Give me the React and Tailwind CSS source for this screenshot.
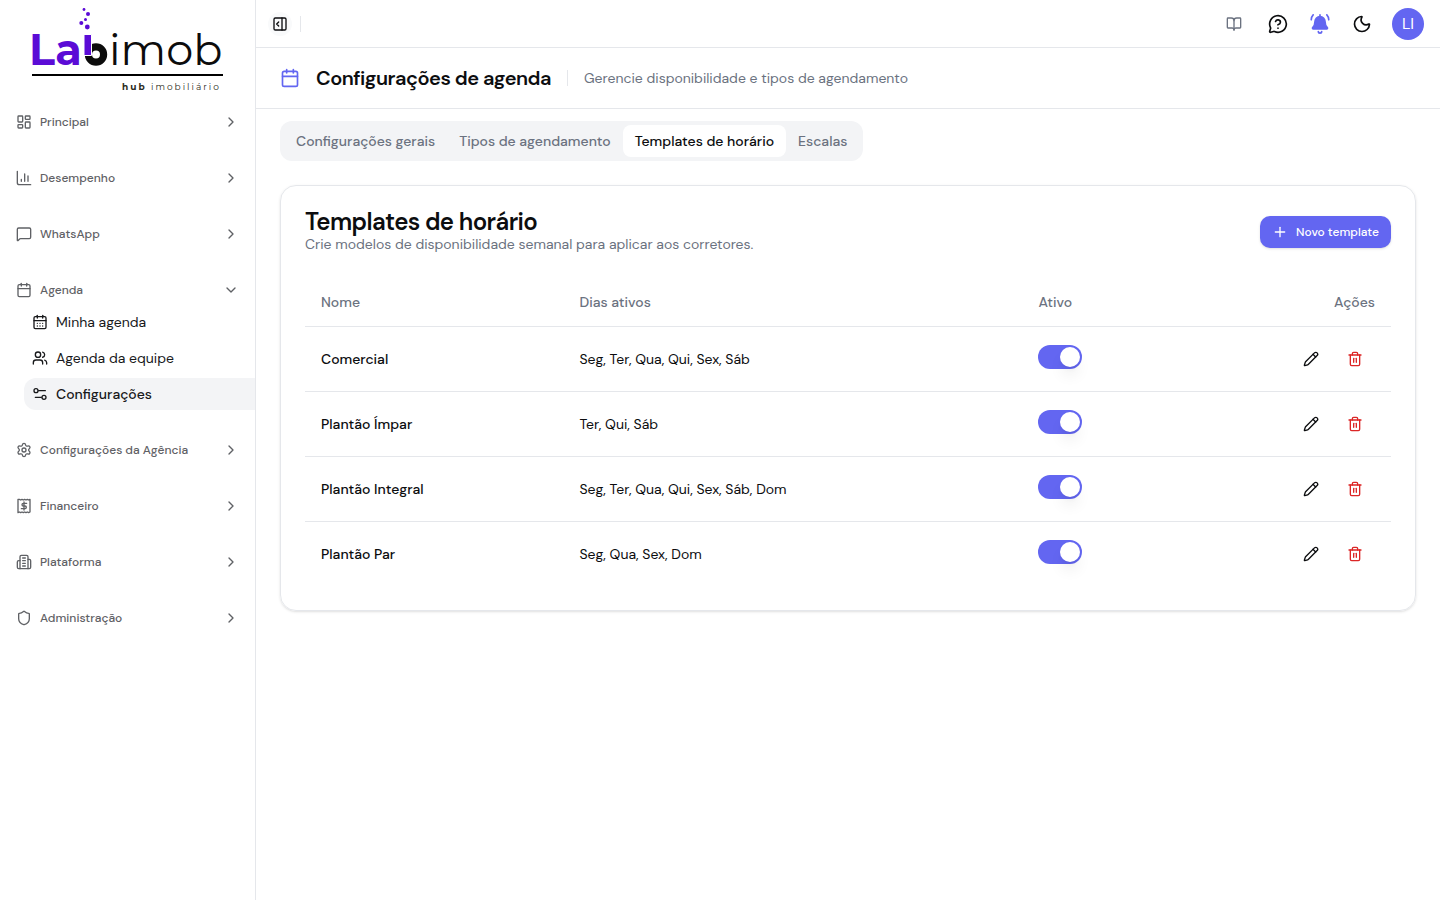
import { useState } from "react";
import {
  LayoutDashboard, MessageSquare, Calendar, CalendarDays, Users,
  Settings, Shield, ChevronRight, ChevronDown, PanelRightOpen, BookOpen,
  MessageCircleQuestionMark, Moon, Plus, Pencil, Trash2,
} from "lucide-react";

const Svg = ({ children, className, w = 2 }) => (
  <svg viewBox="0 0 24 24" fill="none" stroke="currentColor" strokeWidth={w} strokeLinecap="round" strokeLinejoin="round" className={className} aria-hidden="true">
    {children}
  </svg>
);

const Chart = ({ className }) => (
  <Svg className={className}>
    <path d="M2 2v17a3 3 0 0 0 3 3h17M8 17v-3M13 17V6M18 17V9" />
  </Svg>
);
const Dollar = ({ className }) => (
  <Svg className={className}>
    <path d="M3 2v20l2-1 2 1 2-1 2 1 2-1 2 1 2-1 2 1 2-1V2l-2 1-2-1-2 1-2-1-2 1-2-1-2 1-2-1Z" />
    <path d="M16 8h-5a2 2 0 0 0 0 4h2.500a2 2 0 0 1 0 4H8M12 6v12" />
  </Svg>
);
const Office = ({ className }) => (
  <Svg className={className}>
    <path d="M6 22V4a2 2 0 0 1 2-2h8a2 2 0 0 1 2 2v18Z" />
    <path d="M6 10H4a2 2 0 0 0-2 2v8a2 2 0 0 0 2 2h2M18 8h2a2 2 0 0 1 2 2v10a2 2 0 0 1-2 2h-2M10 6h4M10 10h4M10 14h4M10 18h4" />
  </Svg>
);
const Sliders = ({ className }) => (
  <Svg className={className}>
    <circle cx="6" cy="7" r="3" />
    <circle cx="18" cy="17" r="3" />
    <path d="M10 7h10M5 17h9" />
  </Svg>
);
const Bell = ({ className }) => (
  <Svg className={className}>
    <path d="M12 3a6 6 0 0 0-6 6c0 4.500-1.400 6-2.700 7.300A1 1 0 0 0 4 18h16a1 1 0 0 0 .7-1.700C19.400 15 18 13.500 18 9a6 6 0 0 0-6-6Z" fill="currentColor" />
    <path d="M10 21a2 2 0 0 0 4 0M12 1v2M1.500 7c0-2.400.8-4.500 2.300-6M22.500 7c0-2.400-.8-4.500-2.300-6" />
  </Svg>
);

const menu = [
  { label: "Principal", icon: LayoutDashboard },
  { label: "Desempenho", icon: Chart },
  { label: "WhatsApp", icon: MessageSquare },
  {
    label: "Agenda", icon: Calendar, children: [
      { label: "Minha agenda", icon: CalendarDays },
      { label: "Agenda da equipe", icon: Users },
      { label: "Configurações", icon: Sliders, active: true },
    ],
  },
  { label: "Configurações da Agência", icon: Settings },
  { label: "Financeiro", icon: Dollar },
  { label: "Plataforma", icon: Office },
  { label: "Administração", icon: Shield },
];

const tabs = ["Configurações gerais", "Tipos de agendamento", "Templates de horário", "Escalas"];

const initialRows = [
  { name: "Comercial", days: "Seg, Ter, Qua, Qui, Sex, Sáb" },
  { name: "Plantão Ímpar", days: "Ter, Qui, Sáb" },
  { name: "Plantão Integral", days: "Seg, Ter, Qua, Qui, Sex, Sáb, Dom" },
  { name: "Plantão Par", days: "Seg, Qua, Sex, Dom" },
];

function Logo() {
  return (
    <svg viewBox="-8 0 208 84" className="h-[84px] w-52 overflow-visible font-['Montserrat','DM_Sans',sans-serif]" role="img" aria-label="Labimob hub imobiliário">
      <g fill="#5b0bd6">
        <circle cx="52" cy="1.500" r="1.400" />
        <circle cx="56" cy="6" r="2" />
        <circle cx="53.500" cy="11.500" r="1.500" />
        <circle cx="49.300" cy="15" r="2" />
        <circle cx="55.300" cy="19" r="2.400" />
      </g>
      <text x="-3" y="57" fontWeight="700" fontSize="43" fill="#5b0bd6">La</text>
      <circle cx="64" cy="46.500" r="7.600" fill="none" stroke="#0c0c0c" strokeWidth="7.200" />
      <path d="M52 26.500h7.500v21H52z" fill="#5b0bd6" stroke="#fff" strokeWidth="1" />
      <text x="77" y="57" fontWeight="400" fontSize="43" fill="#0c0c0c">imob</text>
      <path d="M0 67h191" stroke="#000" strokeWidth="2" />
      <text x="90" y="82" fontSize="9" className="tracking-[2px]" fill="#2b2a20"><tspan fontWeight="700">hub</tspan> imobiliário</text>
    </svg>
  );
}

function Sidebar() {
  return (
    <aside className="flex w-64 shrink-0 flex-col border-r border-gray-200">
      <div className="px-6 pt-2 pb-3.5"><Logo /></div>
      <nav className="flex flex-col gap-6">
        {menu.map(({ label, icon: Icon, children }) => (
          <div key={label}>
            <button type="button" aria-expanded={!!children} className="flex h-8 w-full items-center gap-2 px-4 text-xs font-medium text-[#5f6165]">
              <Icon className="size-4 shrink-0" />
              <span className="flex-1 text-left">{label}</span>
              {children ? <ChevronDown className="size-4" /> : <ChevronRight className="size-4" />}
            </button>
            {children && (
              <ul className="flex flex-col gap-1 pl-6">
                {children.map(({ label: l, icon: I, active }) => (
                  <li key={l}>
                    <a href="#" className={active ? "flex h-8 items-center gap-2 rounded-l-xl bg-gray-100 pl-2 text-sm font-medium text-[#18191b]" : "flex h-8 items-center gap-2 pl-2 text-sm text-[#18191b]"}>
                      <I className="size-4 shrink-0" />
                      {l}
                    </a>
                  </li>
                ))}
              </ul>
            )}
          </div>
        ))}
      </nav>
    </aside>
  );
}

export default function App() {
  const [tab, setTab] = useState(2);
  return (
    <div className="flex min-h-screen bg-white font-['DM_Sans',Inter,sans-serif] text-[#0c0d0f]">
      <Sidebar />
      <div className="min-w-0 flex-1">
        <div className="flex h-12 items-center justify-between border-b border-gray-200 px-3 pr-4">
          <div className="flex items-center gap-2">
            <button type="button" aria-label="Recolher menu" className="flex size-6 items-center justify-center rounded-full bg-gray-50"><PanelRightOpen className="size-4" /></button>
            <div className="h-4 w-px bg-gray-200" />
          </div>
          <div className="flex items-center gap-3">
            <button type="button" aria-label="Documentação" className="flex size-8 items-center justify-center text-[#6b7280]"><BookOpen className="size-4" /></button>
            <div className="flex items-center gap-2.5">
              <button type="button" aria-label="Ajuda" className="flex size-8 items-center justify-center"><MessageCircleQuestionMark className="size-5" /></button>
              <button type="button" aria-label="Notificações" className="flex size-8 items-center justify-center text-[#6366f1]"><Bell className="size-5" /></button>
              <button type="button" aria-label="Tema escuro" className="flex size-8 items-center justify-center"><Moon className="size-5" /></button>
              <button type="button" className="ml-1 size-8 rounded-full bg-[#6366f1] text-base text-white">LI</button>
            </div>
          </div>
        </div>
        <header className="flex h-[61px] items-center border-b border-gray-200 px-6">
          <Calendar className="size-5 text-[#6366f1]" />
          <h1 className="ml-4 text-xl font-semibold tracking-tight">Configurações de agenda</h1>
          <div className="mx-4 h-4 w-px bg-gray-200" />
          <p className="text-sm text-[#6b7280]">Gerencie disponibilidade e tipos de agendamento</p>
        </header>
        <main className="px-6 pt-3">
          <div role="tablist" className="inline-flex h-10 items-center rounded-xl bg-gray-100 p-1 align-top">
            {tabs.map((t, i) => (
              <button key={t} type="button" role="tab" aria-selected={i === tab} onClick={() => setTab(i)} className={i === tab ? "h-8 rounded-lg bg-white px-3 text-sm font-medium text-[#0c0d0f]" : "h-8 rounded-lg px-3 text-sm font-medium text-[#6b7280]"}>{t}</button>
            ))}
          </div>
          <section className="mt-6 rounded-2xl border border-gray-200 p-6 shadow-sm">
            <div className="flex items-center justify-between">
              <div>
                <h2 className="text-2xl leading-6 font-semibold tracking-tight">Templates de horário</h2>
                <p className="text-sm text-[#6b7280]">Crie modelos de disponibilidade semanal para aplicar aos corretores.</p>
              </div>
              <button type="button" className="flex h-8 items-center gap-2 rounded-[10px] bg-[#6366f1] px-3 text-xs font-medium text-white shadow-sm"><Plus className="size-4" />Novo template</button>
            </div>
            <table className="mt-6 w-full text-left text-sm">
              <thead>
                <tr className="h-12 border-b border-gray-200 text-[#6b7280]">
                  <th className="px-4 font-medium">Nome</th>
                  <th className="px-4 font-medium">Dias ativos</th>
                  <th className="px-4 font-medium">Ativo</th>
                  <th className="px-4 text-right font-medium">Ações</th>
                </tr>
              </thead>
              <tbody>
                {initialRows.map(({ name, days }) => (
                  <tr key={name} className="h-[65px] border-b border-gray-200 last:border-b-0">
                    <td className="px-4 font-medium">{name}</td>
                    <td className="px-4">{days}</td>
                    <td className="px-4">
                      <label className="mb-1 block h-6 w-11 rounded-full bg-gray-200 p-0.5 has-checked:bg-[#6366f1]">
                        <input type="checkbox" defaultChecked aria-label={"Ativo: " + name} className="peer sr-only" />
                        <span className="block size-5 rounded-full bg-white shadow-lg peer-checked:ml-5" />
                      </label>
                    </td>
                    <td className="px-4">
                      <div className="flex justify-end gap-1">
                        <button type="button" aria-label={"Editar " + name} className="flex size-10 items-center justify-center"><Pencil className="size-4" /></button>
                        <button type="button" aria-label={"Excluir " + name} className="flex size-10 items-center justify-center text-[#dc2626]"><Trash2 className="size-4" /></button>
                      </div>
                    </td>
                  </tr>
                ))}
              </tbody>
            </table>
          </section>
        </main>
      </div>
    </div>
  );
}
